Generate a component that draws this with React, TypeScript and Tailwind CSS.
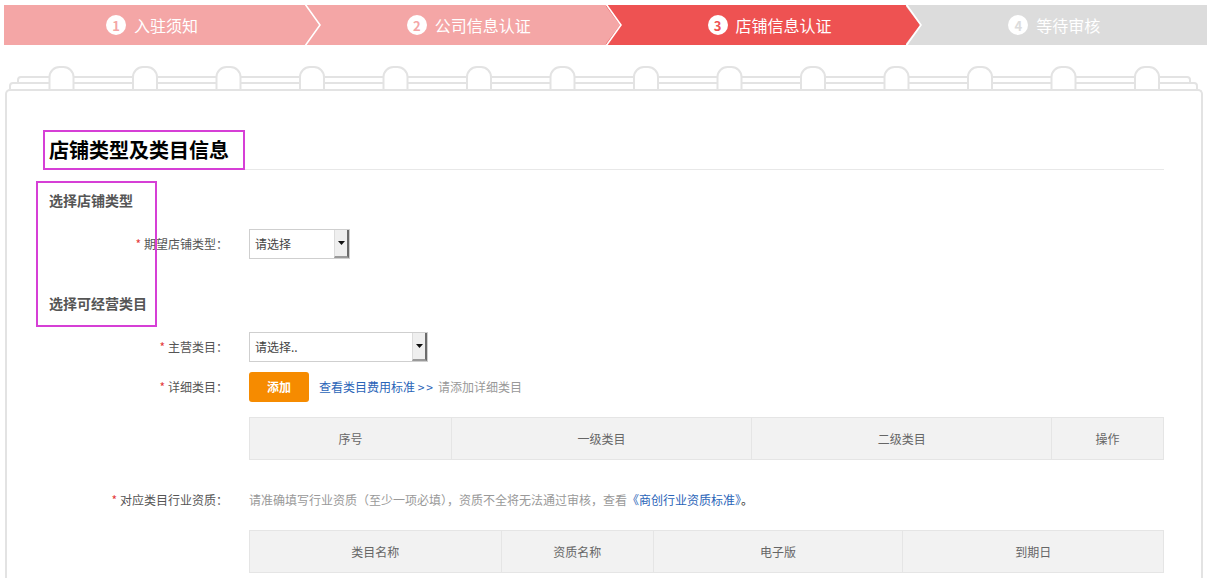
import React from "react";

interface Step {
  no: number;
  title: string;
  bg: string;
  fill: string;
  num: string;
}

const steps: Step[] = [
  { no: 1, title: "入驻须知", bg: "bg-[#f4a6a6]", fill: "#f4a6a6", num: "text-[#f4a6a6]" },
  { no: 2, title: "公司信息认证", bg: "bg-[#f4a6a6]", fill: "#f4a6a6", num: "text-[#f4a6a6]" },
  { no: 3, title: "店铺信息认证", bg: "bg-[#ee5252]", fill: "#ee5252", num: "text-[#ee5252]" },
  { no: 4, title: "等待审核", bg: "bg-[#dcdcdc]", fill: "#dcdcdc", num: "text-[#dcdcdc]" },
];

const ringXs = Array.from({ length: 14 }, (_, i) => 56.5 + i * 83.5);

const NotebookTop = () => (
  <svg width="1198" height="23" className="block ml-[5px] mt-[21px]">
    <path d="M13 17 V14 Q13 11 16 11 H1182 Q1185 11 1185 14 V17" fill="none" stroke="#e3e3e3" strokeWidth="2" />
    <path d="M5 24 V20 Q5 17 8 17 H1189 Q1192 17 1192 20 V24" fill="none" stroke="#e3e3e3" strokeWidth="2" />
    {ringXs.map((cx) => (
      <rect key={cx} x={cx - 12} y={1} width={24} height={34} rx={10} fill="#fff" stroke="#e3e3e3" strokeWidth="2" />
    ))}
  </svg>
);

const Select = ({ text, width }: { text: string; width: string }) => (
  <div className={`${width} h-[30px] border border-[#cfcfcf] bg-white flex items-center justify-between`}>
    <span className="pl-[5px] text-[12px] text-[#444]">{text}</span>
    <span className="w-[15px] h-[28px] bg-[#efefef] border-l border-[#dcdcdc] border-r-2 border-b-2 border-r-[#6b6b6b] border-b-[#9a9a9a] flex items-center justify-center">
      <svg width="7" height="4" viewBox="0 0 7 4">
        <polygon points="0,0 7,0 3.5,4" fill="#111" />
      </svg>
    </span>
  </div>
);

const Label = ({ text }: { text: string }) => (
  <div className="w-[187px] text-right text-[12px] text-[#555] pr-[2px]">
    <span className="text-[#e4393c] mr-[3px]">*</span>
    {text}
  </div>
);

const HeaderTable = ({ cols }: { cols: { title: string; w: string }[] }) => (
  <table className="ml-[206px] w-[915px] border-collapse">
    <thead>
      <tr>
        {cols.map((c) => (
          <th
            key={c.title}
            className={`${c.w} h-[42px] border border-[#e5e5e5] bg-[#f2f2f2] text-[12px] font-normal text-[#666] text-center`}
          >
            {c.title}
          </th>
        ))}
      </tr>
    </thead>
  </table>
);

export default function App() {
  return (
    <div className="w-[1211px] h-[578px] overflow-hidden bg-white font-['Noto_Sans_CJK_SC','Microsoft_YaHei',sans-serif]">
      {/* steps */}
      <div className="mx-[4px] mt-[5px] h-10 flex">
        {steps.map((s, i) => (
          <div key={s.no} className={`relative flex-1 ${s.bg} flex items-center pl-[102px]`}>
            <span className={`w-5 h-5 rounded-full bg-white ${s.num} text-[13px] font-bold flex items-center justify-center leading-none`}>
              {s.no}
            </span>
            <span className="ml-[8px] text-[16px] text-white">{s.title}</span>
            {i < steps.length - 1 && (
              <svg width="18" height="40" viewBox="0 0 18 40" className="absolute top-0 -right-[17px] z-10">
                <polygon points="0,0 15,20 0,40" fill={s.fill} />
                <polyline points="1,-1 16,20 1,41" fill="none" stroke="#fff" strokeWidth="1.6" />
              </svg>
            )}
          </div>
        ))}
      </div>

      <NotebookTop />

      {/* panel */}
      <div className="ml-[5px] w-[1198px] h-[500px] border-x-2 border-t-2 border-[#e3e3e3] rounded-t-[5px] pt-[39px] pl-[36px] pr-[37px]">
        <div className="relative">
          <div className="h-10 border-b border-[#e8e8e8]">
            <h2 className="w-[202px] h-10 border-2 border-[#d63fd6] pl-[4px] flex items-center text-[20px] font-bold text-black">
              店铺类型及类目信息
            </h2>
          </div>

          <div className="mt-[20px] h-5 pl-[6px] flex items-center text-[14px] font-bold text-[#555]">选择店铺类型</div>

          <div className="mt-[19px] flex items-center">
            <Label text="期望店铺类型：" />
            <div className="ml-[19px]">
              <Select text="请选择" width="w-[101px]" />
            </div>
          </div>

          <div className="mt-[34px] h-5 pl-[6px] flex items-center text-[14px] font-bold text-[#555]">选择可经营类目</div>

          <div className="mt-[19px] flex items-center">
            <Label text="主营类目：" />
            <div className="ml-[19px]">
              <Select text="请选择.." width="w-[179px]" />
            </div>
          </div>

          <div className="mt-[10px] flex items-center">
            <Label text="详细类目：" />
            <button className="ml-[19px] w-[60px] h-[30px] rounded-[3px] bg-[#f68b00] text-white text-[12px] font-bold">
              添加
            </button>
            <a className="ml-[10px] text-[12px] text-[#2a64b8]">
              查看类目费用标准 <span className="tracking-[2px]">&gt;&gt;</span>
            </a>
            <span className="ml-[3px] text-[12px] text-[#999]">请添加详细类目</span>
          </div>

          <div className="mt-[15px]">
            <HeaderTable
              cols={[
                { title: "序号", w: "w-[202px]" },
                { title: "一级类目", w: "w-[301px]" },
                { title: "二级类目", w: "w-[300px]" },
                { title: "操作", w: "w-[112px]" },
              ]}
            />
          </div>

          <div className="mt-[30px] h-5 flex items-center">
            <Label text="对应类目行业资质：" />
            <span className="ml-[19px] text-[12px] text-[#999]">
              请准确填写行业资质（至少一项必填），资质不全将无法通过审核，查看
              <a className="text-[#2a64b8]">《商创行业资质标准》</a>
              <span className="text-[#333]">。</span>
            </span>
          </div>

          <div className="mt-[20px]">
            <HeaderTable
              cols={[
                { title: "类目名称", w: "w-[252px]" },
                { title: "资质名称", w: "w-[152px]" },
                { title: "电子版", w: "w-[250px]" },
                { title: "到期日", w: "w-[261px]" },
              ]}
            />
          </div>

          {/* annotation box */}
          <div className="absolute left-[-7px] top-[51px] w-[121px] h-[146px] border-2 border-[#d63fd6] pointer-events-none" />
        </div>
      </div>
    </div>
  );
}
